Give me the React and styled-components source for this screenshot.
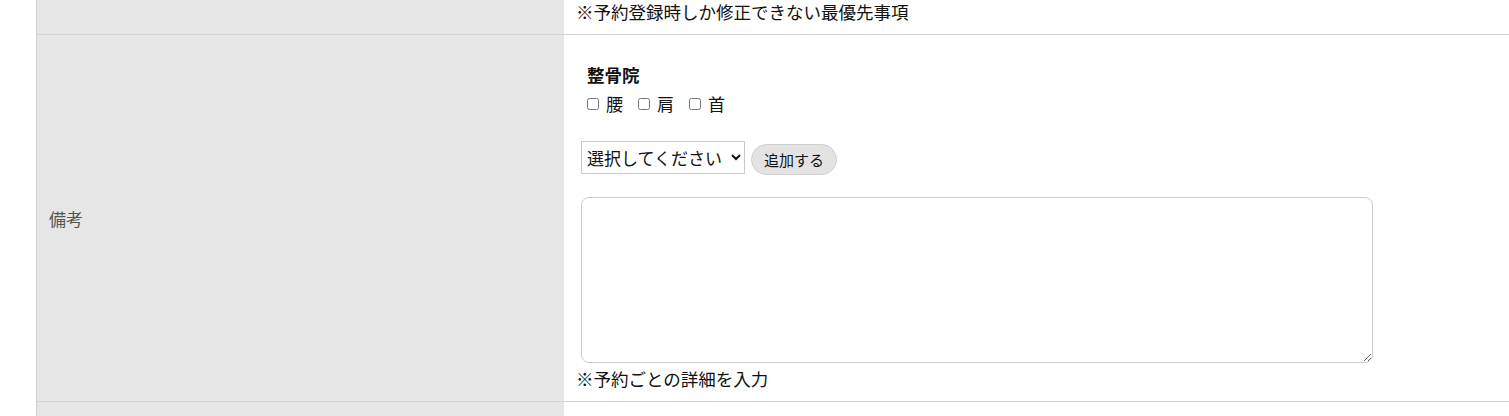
import React from 'react';
import styled, { createGlobalStyle } from 'styled-components';

const GlobalStyle = createGlobalStyle`
  body {
    margin: 0;
    background: #fff;
    font-family: 'Noto Sans CJK JP', 'Noto Sans', sans-serif;
    color: #111;
    overflow: hidden;
  }
`;

const Table = styled.table`
  margin-left: 36px;
  width: 1473px;
  border-collapse: collapse;
  border-left: 1px solid #cfcfcf;
`;

const Row = styled.tr`
  border-bottom: 1px solid #d4d4d4;
`;

const Head = styled.th`
  width: 503px;
  background: #e6e6e6;
  text-align: left;
  font-weight: normal;
  font-size: 17px;
  color: #555;
  padding: 0 12px;
  vertical-align: middle;
`;

const Cell = styled.td`
  padding: ${(p) => p.$pad || '0 12px'};
  font-size: 17.5px;
  line-height: 24px;
  vertical-align: top;
`;

const Note = styled.div`
  font-size: 17.5px;
  line-height: 24px;
`;

const Group = styled.div`
  padding-left: 5px;
`;

const GroupTitle = styled.div`
  padding-left: 6px;
  font-weight: bold;
  font-size: 17.5px;
  line-height: 24px;
`;

const Checks = styled.div`
  display: flex;
  gap: 15px;
  padding-left: 6px;
  margin-top: 5px;
`;

const CheckLabel = styled.label`
  display: flex;
  align-items: center;
  font-size: 17px;
  line-height: 24px;
`;

const Box = styled.input`
  width: 12px;
  height: 12px;
  margin: 0 7px 0 0;
`;

const AddRow = styled.div`
  display: flex;
  align-items: flex-start;
  gap: 6px;
  margin-top: 25px;
`;

const Select = styled.select`
  width: 164px;
  height: 33px;
  border: 1px solid #c8c8c8;
  border-radius: 0;
  background: #fff;
  font-family: inherit;
  font-size: 17px;
  color: #111;
  padding: 0 1px;
`;

const AddButton = styled.button`
  margin-top: 3px;
  height: 31px;
  padding: 0 12px;
  border: 1px solid #cfcfcf;
  border-radius: 16px;
  background: #e3e3e3;
  font-family: inherit;
  font-size: 15px;
  color: #111;
`;

const Memo = styled.textarea`
  display: block;
  box-sizing: border-box;
  width: 792px;
  height: 166px;
  margin-top: 22px;
  border: 1px solid #cccccc;
  border-radius: 8px;
  font-family: inherit;
  font-size: 15px;
`;

const NoteBelow = styled(Note)`
  margin-top: 4px;
  margin-left: -5px;
`;

export default function App() {
  return (
    <>
      <GlobalStyle />
      <Table>
        <tbody>
          <Row>
            <Head />
            <Cell $pad="0 12px 10px">
              <Note>※予約登録時しか修正できない最優先事項</Note>
            </Cell>
          </Row>
          <Row>
            <Head>備考</Head>
            <Cell $pad="28px 12px 10px">
              <Group>
                <GroupTitle>整骨院</GroupTitle>
                <Checks>
                  <CheckLabel><Box type="checkbox" />腰</CheckLabel>
                  <CheckLabel><Box type="checkbox" />肩</CheckLabel>
                  <CheckLabel><Box type="checkbox" />首</CheckLabel>
                </Checks>
                <AddRow>
                  <Select defaultValue="">
                    <option value="">選択してください</option>
                  </Select>
                  <AddButton type="button">追加する</AddButton>
                </AddRow>
                <Memo />
                <NoteBelow>※予約ごとの詳細を入力</NoteBelow>
              </Group>
            </Cell>
          </Row>
          <Row>
            <Head style={{ height: 14 }} />
            <Cell />
          </Row>
        </tbody>
      </Table>
    </>
  );
}
